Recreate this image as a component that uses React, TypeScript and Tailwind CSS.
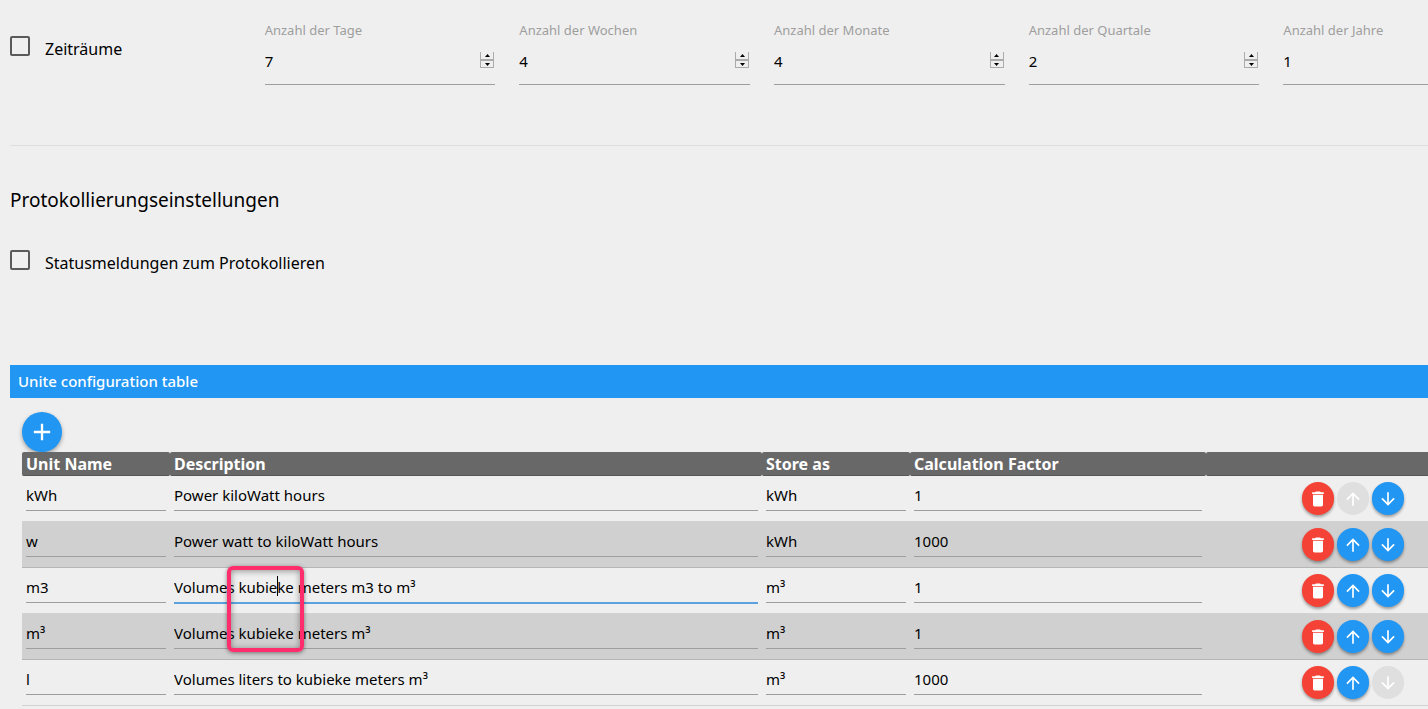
import React, { useState } from "react";
import { MdAdd, MdArrowDownward, MdArrowUpward, MdDelete } from "react-icons/md";

type Unit = {
  name: string;
  description: string;
  storeAs: string;
  factor: string;
};

const periods = [
  { id: "days", label: "Anzahl der Tage", value: 7 },
  { id: "weeks", label: "Anzahl der Wochen", value: 4 },
  { id: "months", label: "Anzahl der Monate", value: 4 },
  { id: "quarters", label: "Anzahl der Quartale", value: 2 },
  { id: "years", label: "Anzahl der Jahre", value: 1 },
];

const units: Unit[] = [
  { name: "kWh", description: "Power kiloWatt hours", storeAs: "kWh", factor: "1" },
  { name: "w", description: "Power watt to kiloWatt hours", storeAs: "kWh", factor: "1000" },
  { name: "m3", description: "Volumes kubieke meters m3 to m³", storeAs: "m³", factor: "1" },
  { name: "m³", description: "Volumes kubieke meters m³", storeAs: "m³", factor: "1" },
  { name: "l", description: "Volumes liters to kubieke meters m³", storeAs: "m³", factor: "1000" },
];

const columns: { key: keyof Unit; title: string; width: string }[] = [
  { key: "name", title: "Unit Name", width: "w-[10%]" },
  { key: "description", title: "Description", width: "w-[40%]" },
  { key: "storeAs", title: "Store as", width: "w-[10%]" },
  { key: "factor", title: "Calculation Factor", width: "w-[20%]" },
];

// row whose description is being edited
const editedRow = 2;

const CheckField = ({ id, label }: { id: string; label: string }) => {
  return (
    <div className="flex items-start">
      <input
        id={id}
        type="checkbox"
        className="size-5 shrink-0 appearance-none rounded-xs border-2 border-[#5a5a5a] checked:bg-[#2196f3]"
      />
      <label htmlFor={id} className="pt-px pl-[15px] text-base leading-6">
        {label}
      </label>
    </div>
  );
};

const NumberField = ({ id, label, initial }: { id: string; label: string; initial: number }) => {
  const [value, setValue] = useState(initial);

  return (
    <div className="flex min-w-0 flex-col">
      <label htmlFor={id} className="text-[13px] leading-5 text-[#9e9e9e]">
        {label}
      </label>
      <div className="flex h-[45px] items-start border-b border-[#9e9e9e] pt-2 pr-px">
        <input
          id={id}
          type="number"
          value={value}
          onChange={(e) => setValue(Number(e.target.value))}
          className="h-[26px] min-w-0 flex-1 bg-transparent text-[15px] outline-none [appearance:textfield]"
        />
        <div className="mt-1 flex w-3.5 flex-col">
          <button
            type="button"
            aria-label={`${label} +`}
            onClick={() => setValue(value + 1)}
            className="flex h-2 items-center justify-center border-x border-b border-[#ababab]"
          >
            <svg viewBox="0 0 5 3" className="h-[3px] w-[5px]">
              <path d="M0 3L2.5 0L5 3Z" />
            </svg>
          </button>
          <button
            type="button"
            aria-label={`${label} -`}
            onClick={() => setValue(value - 1)}
            className="flex h-2 items-center justify-center border border-[#ababab]"
          >
            <svg viewBox="0 0 5 3" className="h-[3px] w-[5px]">
              <path d="M0 0L2.5 3L5 0Z" />
            </svg>
          </button>
        </div>
      </div>
    </div>
  );
};

const RoundButton = ({
  label,
  color,
  disabled,
  children,
}: {
  label: string;
  color: string;
  disabled?: boolean;
  children: React.ReactNode;
}) => {
  return (
    <button
      type="button"
      aria-label={label}
      disabled={disabled}
      className={`flex h-[33px] w-8 items-center justify-center rounded-full text-xl text-white ${
        disabled ? "bg-[#dfdfdf]" : `${color} shadow-[0_2px_3px_rgba(0,0,0,0.35)]`
      }`}
    >
      {children}
    </button>
  );
};

const UnitTable = () => {
  return (
    <table className="w-full table-fixed border-collapse text-left">
      <thead>
        <tr className="h-6 text-base leading-6 text-white">
          {columns.map((col) => (
            <th key={col.key} className={`${col.width} p-0 font-bold`}>
              <div className="h-6 rounded-xs border-b border-[#575757] bg-[#686868] px-1">{col.title}</div>
            </th>
          ))}
          <th className="w-[20%] p-0">
            <div className="h-6 rounded-xs border-b border-[#575757] bg-[#686868]" />
          </th>
        </tr>
      </thead>
      <tbody>
        {units.map((unit, i) => (
          <tr key={unit.name} className="even:bg-[#d0d0d0]">
            {columns.map((col) => {
              const editing = i === editedRow && col.key === "description";
              return (
                <td key={col.key} className="p-0">
                  <div className="relative h-[46px] border-b border-black/12 px-1 pt-[3px]">
                    <input
                      aria-label={`${col.title} ${i + 1}`}
                      defaultValue={unit[col.key]}
                      className={`block w-full bg-transparent text-[15px] outline-none ${
                        editing ? "h-[33px] border-b-2 border-[#5ba3df]" : "h-8 border-b border-[#9e9e9e]"
                      }`}
                    />
                    {editing && (
                      <>
                        <span className="absolute top-2 left-[107px] h-5 w-px bg-black" />
                        <span className="pointer-events-none absolute -top-0.5 left-[57px] z-10 h-[86px] w-[77px] rounded-md border-4 border-[#ff2d6c] shadow-[0_1px_4px_rgba(0,0,0,0.45),inset_0_1px_6px_rgba(0,0,0,0.4)]" />
                      </>
                    )}
                  </div>
                </td>
              );
            })}
            <td className="p-0">
              <div className="flex h-[46px] justify-center gap-[3px] border-b border-black/12 pt-1.5 pr-[3px]">
                <RoundButton label="Delete" color="bg-[#f44336]">
                  <MdDelete />
                </RoundButton>
                <RoundButton label="Move up" color="bg-[#2196f3]" disabled={i === 0}>
                  <MdArrowUpward />
                </RoundButton>
                <RoundButton label="Move down" color="bg-[#2196f3]" disabled={i === units.length - 1}>
                  <MdArrowDownward />
                </RoundButton>
              </div>
            </td>
          </tr>
        ))}
      </tbody>
    </table>
  );
};

export default function App() {
  return (
    <main className="min-h-screen overflow-hidden bg-[#efefef] font-['Noto_Sans',sans-serif] text-black">
      {/* the settings form is wider than the window and runs out on the right */}
      <div className="w-[calc(100%+86px)] pl-2.5">
        <section className="grid grid-cols-6 gap-x-6 border-b border-[#dfdfdf] pt-5 pb-[60px]">
          <div className="pt-4">
            <CheckField id="periods" label="Zeiträume" />
          </div>
          {periods.map((p) => (
            <NumberField key={p.id} id={p.id} label={p.label} initial={p.value} />
          ))}
        </section>

        <section className="pt-10">
          <h2 className="text-[19px] leading-7">Protokollierungseinstellungen</h2>
          <div className="pt-9">
            <CheckField id="status" label="Statusmeldungen zum Protokollieren" />
          </div>
        </section>

        <section className="pt-[90px]">
          <h3 className="bg-[#2196f3] px-2 text-[15px] leading-[33px] font-medium text-white">
            Unite configuration table
          </h3>
          <div className="px-3 pt-3.5">
            <button
              type="button"
              aria-label="Add"
              className="flex size-10 items-center justify-center rounded-full bg-[#2196f3] text-[28px] text-white shadow-[0_2px_4px_rgba(0,0,0,0.35)]"
            >
              <MdAdd />
            </button>
            <UnitTable />
          </div>
        </section>
      </div>
    </main>
  );
}
